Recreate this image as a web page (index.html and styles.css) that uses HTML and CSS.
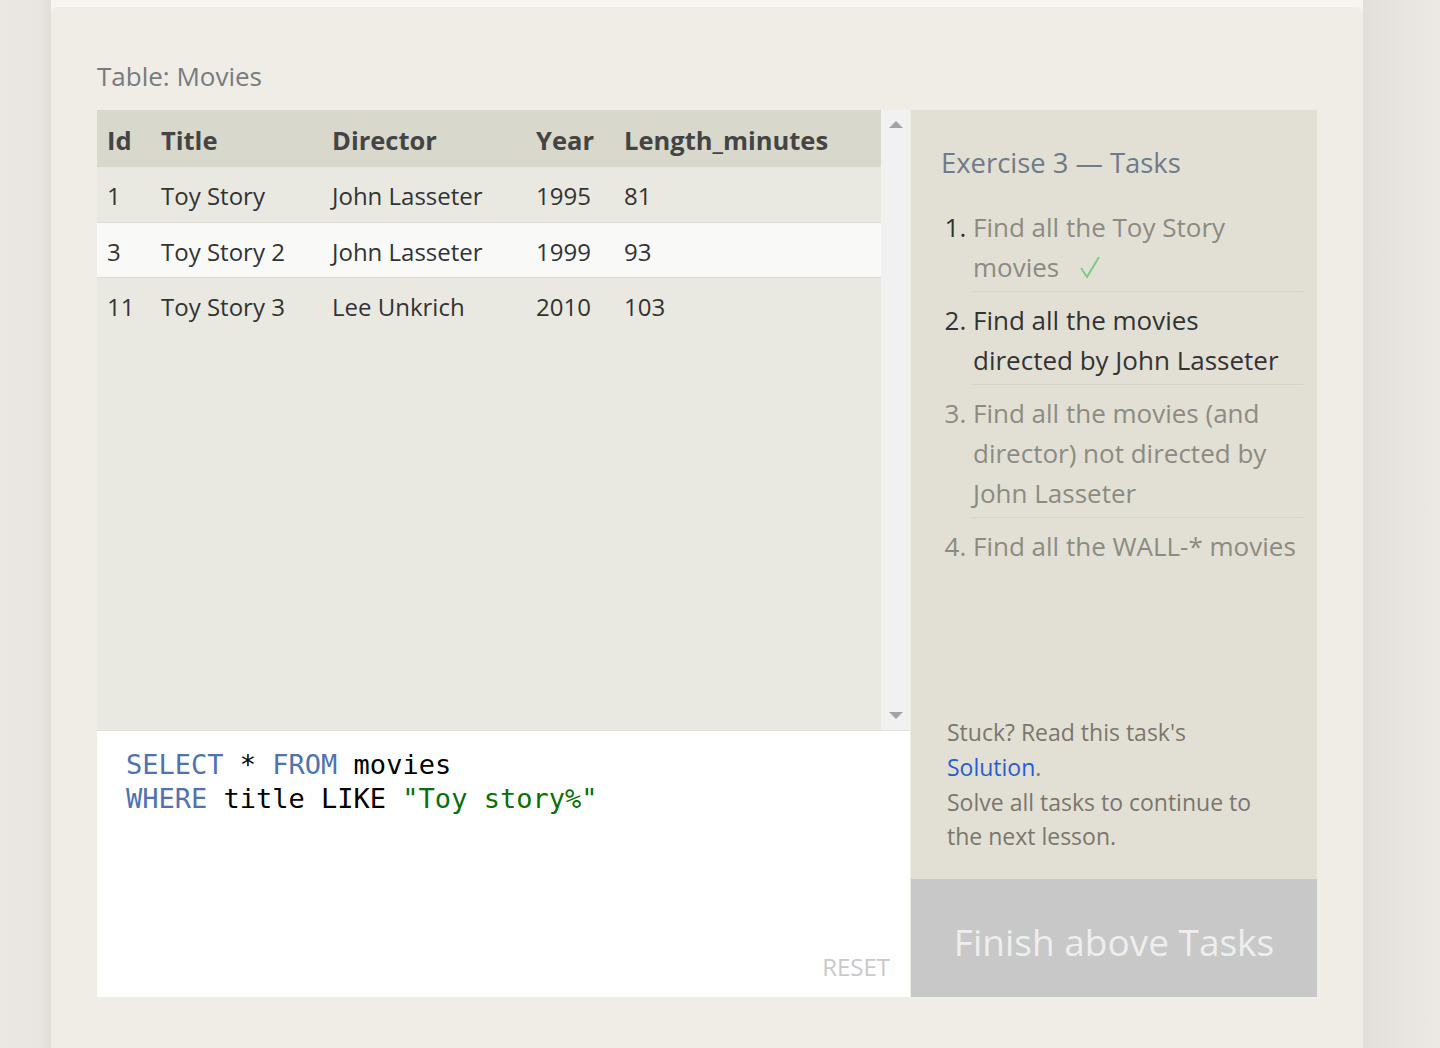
FILE: index.html
```html
<!DOCTYPE html>
<html lang="en">
<head>
<meta charset="utf-8">
<title>SQL Lesson – Exercise 3</title>
<link rel="stylesheet" href="styles.css">
</head>
<body>
<div class="page">
  <div class="topstrip"></div>
  <div class="card">
    <div class="table-caption">Table: Movies</div>
    <div class="workspace">
      <div class="left">
        <div class="table-area">
          <div class="table-view">
            <table class="movies">
              <thead>
                <tr>
                  <th class="c-id">Id</th>
                  <th class="c-title">Title</th>
                  <th class="c-dir">Director</th>
                  <th class="c-year">Year</th>
                  <th class="c-len">Length_minutes</th>
                </tr>
              </thead>
              <tbody>
                <tr><td>1</td><td>Toy Story</td><td>John Lasseter</td><td>1995</td><td>81</td></tr>
                <tr class="alt"><td>3</td><td>Toy Story 2</td><td>John Lasseter</td><td>1999</td><td>93</td></tr>
                <tr><td>11</td><td>Toy Story 3</td><td>Lee Unkrich</td><td>2010</td><td>103</td></tr>
              </tbody>
            </table>
          </div>
          <div class="scrollbar">
            <span class="arrow up"></span>
            <span class="arrow down"></span>
          </div>
        </div>
        <div class="editor">
          <pre class="code"><span class="kw">SELECT</span> * <span class="kw">FROM</span> movies
<span class="kw">WHERE</span> title LIKE <span class="str">"Toy story%"</span></pre>
          <div class="reset">RESET</div>
        </div>
      </div>
      <div class="right">
        <div class="tasks">
          <h2 class="tasks-title">Exercise 3 — Tasks</h2>
          <ol class="task-list">
            <li class="done"><span class="task-text">Find all the Toy Story movies</span><svg class="check" width="22" height="24" viewBox="0 0 22 24"><polyline points="2,13 8,22 20,2" fill="none" stroke="#7ccb86" stroke-width="2"/></svg></li>
            <li class="current">Find all the movies directed by John Lasseter</li>
            <li class="todo">Find all the movies (and director) not directed by John Lasseter</li>
            <li class="todo last">Find all the WALL-* movies</li>
          </ol>
          <div class="spacer"></div>
          <div class="stuck">Stuck? Read this task's<br><a class="solution" href="#">Solution</a>.<br>Solve all tasks to continue to the next lesson.</div>
        </div>
        <div class="finish">Finish above Tasks</div>
      </div>
    </div>
  </div>
</div>
</body>
</html>
```
FILE: styles.css
```css
html, body {
  margin: 0;
  padding: 0;
}
body {
  width: 1440px;
  height: 1048px;
  overflow: hidden;
  background: linear-gradient(to right, #ebe8e4 0px, #e9e5e1 40px, #e2ddd9 51px, #e2ddd9 1363px, #e4e0dc 1370px, #ede9e5 1440px);
  font-family: "Open Sans", "Noto Sans", sans-serif;
  color: #333;
}
.page {
  margin-left: 51px;
  width: 1312px;
  background: #f6f5f1;
}
.topstrip {
  height: 7px;
}
.card {
  background: #efede6;
  border-radius: 6px 6px 0 0;
  padding: 50px 46px 49px 46px;
  height: 1041px;
  box-sizing: border-box;
}
.table-caption {
  font-size: 26px;
  line-height: 39px;
  color: #777b80;
  margin-bottom: 14px;
}
.workspace {
  display: flex;
  width: 1221px;
}
.left {
  width: 813px;
  display: flex;
  flex-direction: column;
}
.table-area {
  height: 620px;
  display: flex;
  background: #e9e8e0;
}
.table-view {
  width: 784px;
  background: #eae9e1;
}
.movies {
  border-collapse: collapse;
  width: 784px;
  font-size: 24px;
  table-layout: fixed;
}
.movies th, .movies td {
  text-align: left;
  padding: 0 0 0 10px;
  white-space: nowrap;
}
.movies th {
  background: #d9d8cc;
  color: #444;
  font-weight: 700;
  font-size: 25.5px;
  height: 57px;
  padding-top: 2px;
  box-sizing: border-box;
}
.movies td {
  height: 55px;
  padding-top: 3px;
  box-sizing: border-box;
  color: #333;
  border-bottom: 1px solid #dcdbd3;
}
.movies tr.alt td {
  background: #f9f9f8;
}
.movies tbody tr:last-child td {
  border-bottom: none;
}
.c-id { width: 54px; }
.c-title { width: 171px; }
.c-dir { width: 204px; }
.c-year { width: 88px; }
.scrollbar {
  width: 29px;
  background: #f1f1f1;
  display: flex;
  flex-direction: column;
  justify-content: space-between;
  align-items: center;
  padding: 11px 0 11px 0;
  box-sizing: border-box;
}
.arrow {
  width: 0;
  height: 0;
  border-left: 7px solid transparent;
  border-right: 7px solid transparent;
}
.arrow.up {
  border-bottom: 7px solid #a3a3a3;
}
.arrow.down {
  border-top: 7px solid #a3a3a3;
}
.editor {
  height: 267px;
  background: #fff;
  border-top: 1px solid #e3e2d9;
  box-sizing: border-box;
  display: flex;
  flex-direction: column;
  justify-content: space-between;
  padding: 17px 20px 15px 29px;
}
.code {
  margin: 0;
  font-family: "DejaVu Sans Mono", "Liberation Mono", monospace;
  font-size: 27px;
  line-height: 34px;
  color: #000;
}
.kw { color: #4f72b5; }
.str { color: #0a6e0a; }
.reset {
  align-self: flex-end;
  font-size: 24px;
  line-height: 30px;
  color: #c9c9c9;
}
.right {
  width: 406px;
  margin-left: 1px;
  display: flex;
  flex-direction: column;
}
.tasks {
  flex: 1;
  background: #e2e0d5;
  display: flex;
  flex-direction: column;
  padding: 33px 14px 25px 30px;
}
.tasks-title {
  margin: 0;
  font-weight: 400;
  font-size: 27.4px;
  line-height: 40px;
  color: #6f7b8a;
}
.task-list {
  margin: 24px 0 0 0;
  padding: 0 0 0 32px;
  font-size: 26px;
  line-height: 40px;
}
.task-list li {
  padding: 0 0 4px 0;
  margin-top: 8px;
  border-bottom: 1px solid #d6d4c9;
}
.task-list li:first-child {
  margin-top: 0;
}
.task-list li.last {
  border-bottom: none;
}
.task-list li.done {
  color: #333;
}
.task-text {
  color: #8c8b82;
}
.check {
  margin-left: 20px;
  vertical-align: -2px;
}
.task-list li.current {
  color: #333;
}
.task-list li.todo {
  color: #8c8b82;
}
.spacer {
  flex: 1;
}
.stuck {
  padding-left: 6px;
  width: 320px;
  font-size: 23px;
  line-height: 34.7px;
  color: #7b766c;
}
.solution {
  color: #2a5bd7;
  text-decoration: none;
}
.finish {
  height: 118px;
  background: #c8c8c8;
  color: #eeeeee;
  font-size: 37px;
  padding-top: 6px;
  box-sizing: border-box;
  display: flex;
  align-items: center;
  justify-content: center;
}
```
